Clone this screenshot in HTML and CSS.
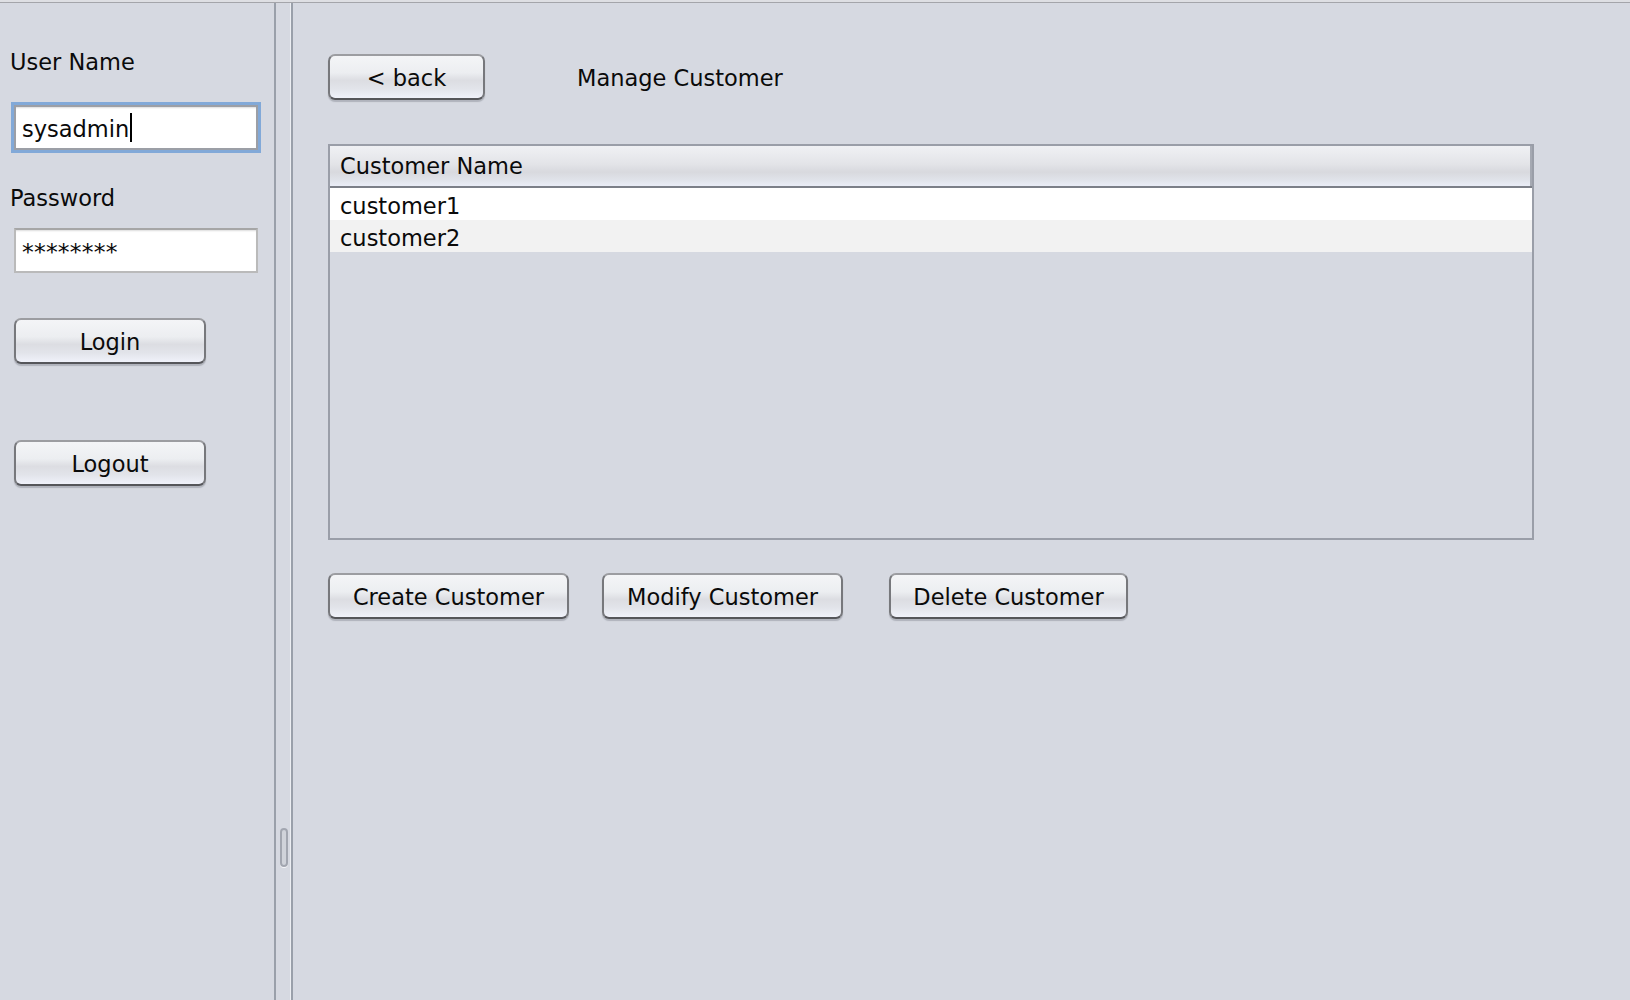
FILE: index.html
```html
<!DOCTYPE html>
<html>
<head>
<meta charset="utf-8">
<title>Manage Customer</title>
<link rel="stylesheet" href="styles.css">
</head>
<body>
<div class="window">
  <div class="topline"></div>
  <div class="split">
    <aside class="left">
      <div class="lbl lbl-user">User Name</div>
      <div class="field focused"><span class="val">sysadmin</span><span class="caret"></span></div>
      <div class="lbl lbl-pass">Password</div>
      <div class="field pwd"><span class="val">********</span></div>
      <button class="btn btn-side btn-login">Login</button>
      <button class="btn btn-side btn-logout">Logout</button>
    </aside>
    <div class="divider"><div class="grip"></div></div>
    <main class="right">
      <div class="toolbar">
        <button class="btn btn-back">&lt; back</button>
        <span class="title">Manage Customer</span>
      </div>
      <div class="table">
        <div class="thead"><div class="th">Customer Name</div></div>
        <div class="row row-odd">customer1</div>
        <div class="row row-even">customer2</div>
      </div>
      <div class="actions">
        <button class="btn btn-act">Create Customer</button>
        <button class="btn btn-act">Modify Customer</button>
        <button class="btn btn-act btn-delete">Delete Customer</button>
      </div>
    </main>
  </div>
</div>
</body>
</html>
```

FILE: styles.css
```css
html, body {
  margin: 0;
  padding: 0;
  height: 100%;
}
body {
  background: #d6d9e1;
  font-family: "DejaVu Sans", "Noto Sans", sans-serif;
  font-size: 22.5px;
  color: #0a0a0a;
  overflow: hidden;
}
.window {
  display: flex;
  flex-direction: column;
  height: 1000px;
}
.topline {
  height: 2px;
  background: #dedfe3;
  border-bottom: 1px solid #a4a5aa;
  flex: none;
}
.split {
  display: flex;
  flex: 1;
}
.left {
  width: 274px;
  flex: none;
  display: flex;
  flex-direction: column;
  align-items: flex-start;
  padding-left: 10px;
  box-sizing: border-box;
}
.lbl {
  line-height: 26px;
  height: 26px;
}
.lbl-user { margin-top: 46px; }
.lbl-pass { margin-top: 35px; }
.field {
  box-sizing: border-box;
  width: 244px;
  height: 45px;
  margin-left: 4px;
  background: #fff;
  border: 2px solid #bababa;
  border-top-color: #a6a6a6;
  box-shadow: inset 0 2px 2px -1px rgba(0,0,0,0.14);
  display: flex;
  align-items: center;
  padding: 2px 0 0 6px;
}
.field .val {
  line-height: 26px;
  white-space: pre;
}
.field.focused {
  margin-top: 30px;
  border-color: #9c9fa6;
  box-shadow: 0 0 0 3px #82a9d8, inset 0 2px 2px -1px rgba(0,0,0,0.14);
}
.field.pwd {
  margin-top: 17px;
}
.field.pwd .val {
  font-size: 23.5px;
  letter-spacing: 0.2px;
}
.caret {
  display: inline-block;
  width: 2px;
  height: 29px;
  background: #000;
  margin-left: 1px;
  margin-top: -2px;
}
.btn {
  box-sizing: border-box;
  height: 46px;
  padding: 2px 0 0;
  border: 2px solid #77787c;
  border-top-color: #9c9da1;
  border-bottom-color: #55565a;
  border-radius: 7px;
  background: linear-gradient(#f4f5f7 0%, #eceef1 40%, #dcdde2 58%, #e2e4ea 78%, #f0f2fa 100%);
  box-shadow: 0 2px 1px rgba(80,84,95,0.28);
  font-family: "DejaVu Sans", "Noto Sans", sans-serif;
  font-size: 22.5px;
  line-height: 26px;
  color: #0a0a0a;
  text-align: center;
}
.btn-side {
  width: 192px;
  margin-left: 4px;
}
.btn-login { margin-top: 45px; }
.btn-logout { margin-top: 76px; }
.divider {
  width: 19px;
  flex: none;
  box-sizing: border-box;
  border-left: 2px solid #9aa0aa;
  border-right: 2px solid #9aa0aa;
  box-shadow: inset -1px 0 0 #eceef2;
}
.grip {
  box-sizing: border-box;
  width: 8px;
  height: 39px;
  margin: 825px 0 0 4px;
  border: 2px solid #a2a6b0;
  border-radius: 4px;
  background: #d0d3da;
  box-shadow: 0 1px 0 #f4f5f8;
}
.right {
  flex: 1;
  padding-left: 35px;
  display: flex;
  flex-direction: column;
  align-items: flex-start;
}
.toolbar {
  margin-top: 51px;
  display: flex;
  align-items: center;
}
.btn-back {
  width: 157px;
}
.title {
  margin-left: 92px;
  line-height: 26px;
  padding-top: 2px;
}
.table {
  margin-top: 44px;
  box-sizing: border-box;
  width: 1206px;
  height: 396px;
  border: 2px solid #9a9ea8;
  background: #d6d9e1;
}
.thead {
  box-sizing: border-box;
  height: 42px;
  border-bottom: 2px solid #7b7f88;
  background: linear-gradient(#f0f1f4 0%, #e3e4e8 45%, #d8d9de 65%, #e0e3ea 85%, #eaedf7 100%);
}
.th {
  box-sizing: border-box;
  height: 40px;
  padding: 7px 0 0 10px;
  line-height: 26px;
  border-right: 2px solid #a5a9b2;
}
.row {
  box-sizing: border-box;
  height: 32px;
  padding: 5px 0 0 10px;
  line-height: 26px;
}
.row-odd { background: #ffffff; }
.row-even { background: #f2f2f2; }
.actions {
  margin-top: 33px;
  display: flex;
  gap: 33px;
}
.btn-act {
  width: 241px;
}
.btn-delete {
  width: 239px;
  margin-left: 13px;
}
```
